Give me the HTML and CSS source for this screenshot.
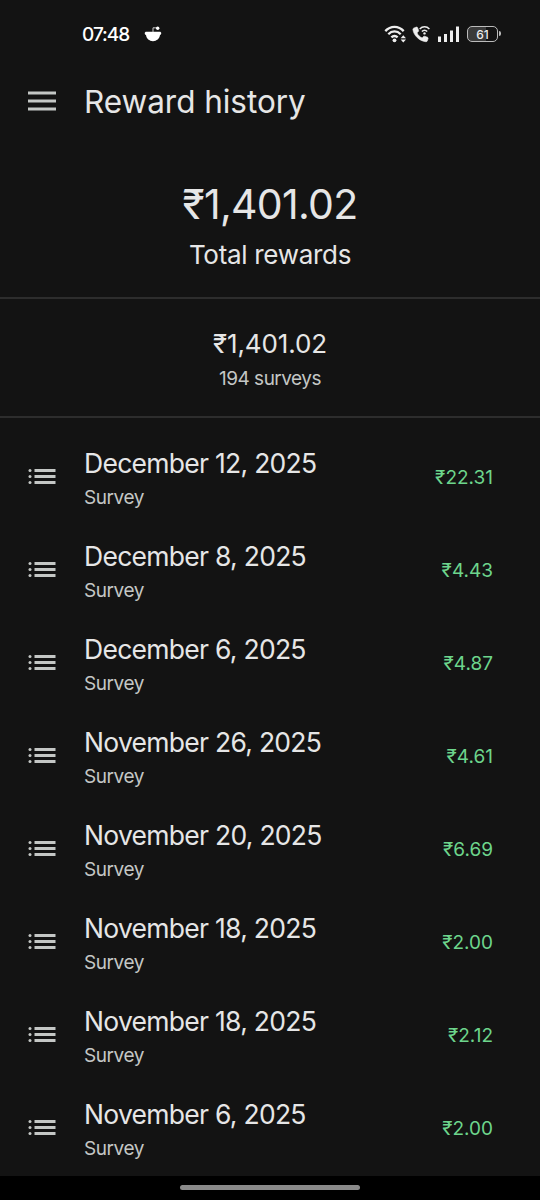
FILE: index.html
```html
<!DOCTYPE html>
<html lang="en">
<head>
  <meta charset="UTF-8" />
  <meta name="viewport" content="width=device-width, initial-scale=1.0" />
  <title>Reward history</title>
  <link rel="stylesheet" href="styles.css">
</head>

<body>
  <svg class="defs" width="0" height="0">
    <symbol id="list-icon" viewBox="0 0 28 18">
      <circle cx="2" cy="2.500" r="1.500" />
      <circle cx="2" cy="8.500" r="1.500" />
      <circle cx="2" cy="14.500" r="1.500" />
      <path d="M6.500 1h21v3h-21zM6.500 7h21v3h-21zM6.500 13h21v3h-21z" />
    </symbol>
  </svg>

  <div class="status-bar">
    <span class="time">07:48</span>
    <svg class="reddit" width="18" height="17" viewBox="0 0 18 17">
      <path d="M2.300 5.800h13.400c1.900 0 2.100 2.600.3 3.300-.4 3.600-3.300 6.100-7 6.100s-6.600-2.500-7-6.100C.2 8.400.4 5.800 2.300 5.800z" fill="#fff" />
      <path d="M9 6V1.800l4.200.1" fill="none" stroke="#ccc" stroke-width="1" />
      <circle cx="13.700" cy="2.200" r="1.700" fill="#fff" />
    </svg>
    <div class="status-icons">
      <svg class="wifi" width="23" height="18" viewBox="0 0 23 18">
        <path d="M1.300 6.100C6.500.5 14.500.5 19.700 6.100M4.300 9.300c3.600-3.800 8.800-3.800 12.400 0M7.400 12.400c1.800-1.900 4.400-1.900 6.200 0" fill="none" stroke="#eee" stroke-width="2.300" />
        <circle cx="10.500" cy="15.300" r="1.900" fill="#eee" />
        <path d="M16.600 13.200l2.700-2.900 2.700 2.900zM16.600 14.500H22l-2.700 2.900z" fill="#eee" />
      </svg>
      <svg class="call" width="19" height="18" viewBox="0 0 19 18">
        <path d="M2.100 2.900l2.300-.8c.6-.2 1 .1 1.200.6l1 2.700c.2.500 0 .9-.3 1.200L5 7.800c.9 2.300 2.800 4.200 5.200 5.200l1.300-1.500c.3-.3.700-.4 1.100-.3l2.900 1.100c.5.200.7.700.6 1.200l-.7 2.200c-.2.700-.8 1.100-1.500 1C7.400 16.100 1.700 10.500.9 4.500c-.1-.7.400-1.300 1.200-1.600z" fill="#eee" stroke="#eee" stroke-width=".6" />
        <path d="M7.700 4c2.800-3 6.900-3 9.700 0M9.900 6.500c1.600-1.700 3.700-1.700 5.300 0" fill="none" stroke="#eee" stroke-width="1.500" />
        <circle cx="12.500" cy="8.400" r="1.200" fill="#eee" />
      </svg>
      <svg class="signal" width="23" height="16" viewBox="0 0 23 16">
        <path d="M1 10.500h3V16H1zM7 8h3v8H7zM13 4.500h3V16h-3zM19 .5h3V16h-3z" fill="#eee" />
      </svg>
      <div class="battery">61</div>
    </div>
  </div>

  <header>
    <svg class="menu" width="28" height="20" viewBox="0 0 28 20">
      <path d="M0 .4h28v3H0zM0 8.400h28v3H0zM0 16.400h28v3H0z" />
    </svg>
    <h1>Reward history</h1>
  </header>

  <section class="total">
    <div class="total-amount">₹1,401.02</div>
    <div class="total-label">Total rewards</div>
  </section>

  <section class="summary">
    <div class="summary-amount">₹1,401.02</div>
    <div class="summary-label">194 surveys</div>
  </section>

  <ul class="history">
    <li>
      <svg class="icon"><use href="#list-icon" /></svg>
      <div class="entry"><h2>December 12, 2025</h2><p>Survey</p></div>
      <span class="amount">₹22.31</span>
    </li>
    <li>
      <svg class="icon"><use href="#list-icon" /></svg>
      <div class="entry"><h2>December 8, 2025</h2><p>Survey</p></div>
      <span class="amount">₹4.43</span>
    </li>
    <li>
      <svg class="icon"><use href="#list-icon" /></svg>
      <div class="entry"><h2>December 6, 2025</h2><p>Survey</p></div>
      <span class="amount">₹4.87</span>
    </li>
    <li>
      <svg class="icon"><use href="#list-icon" /></svg>
      <div class="entry"><h2>November 26, 2025</h2><p>Survey</p></div>
      <span class="amount">₹4.61</span>
    </li>
    <li>
      <svg class="icon"><use href="#list-icon" /></svg>
      <div class="entry"><h2>November 20, 2025</h2><p>Survey</p></div>
      <span class="amount">₹6.69</span>
    </li>
    <li>
      <svg class="icon"><use href="#list-icon" /></svg>
      <div class="entry"><h2>November 18, 2025</h2><p>Survey</p></div>
      <span class="amount">₹2.00</span>
    </li>
    <li>
      <svg class="icon"><use href="#list-icon" /></svg>
      <div class="entry"><h2>November 18, 2025</h2><p>Survey</p></div>
      <span class="amount">₹2.12</span>
    </li>
    <li>
      <svg class="icon"><use href="#list-icon" /></svg>
      <div class="entry"><h2>November 6, 2025</h2><p>Survey</p></div>
      <span class="amount">₹2.00</span>
    </li>
  </ul>

  <footer>
    <div class="handle"></div>
  </footer>
</body>
</html>
```

FILE: styles.css
```css
* {
  box-sizing: border-box;
  margin: 0;
  padding: 0;
}

body {
  display: flex;
  flex-direction: column;
  height: 1200px;
  overflow: hidden;
  background: #131313;
  color: #e6e6e6;
  font-family: Inter, Roboto, sans-serif;
}

.defs {
  position: absolute;
}

.status-bar {
  display: flex;
  align-items: center;
  height: 68px;
  padding: 0 42px 0 82px;
}

.time {
  width: 62px;
  padding-top: 1px;
  font-size: 19px;
  font-weight: 500;
  letter-spacing: -1px;
  color: #fff;
}

.status-icons {
  display: flex;
  align-items: center;
  margin-left: auto;
}

.call {
  margin-left: 5px;
}

.signal {
  margin-left: 6px;
}

.battery {
  position: relative;
  width: 31px;
  height: 16px;
  margin-left: 7px;
  border: 1.5px solid #bbb;
  border-radius: 5px;
  background: linear-gradient(to right, #3a3a3a 61%, #131313 61%);
  color: #eee;
  font-size: 12px;
  font-weight: 500;
  line-height: 15px;
  text-align: center;
}

.battery::after {
  content: "";
  position: absolute;
  top: 4px;
  right: -3.5px;
  width: 2px;
  height: 5px;
  border-radius: 0 2px 2px 0;
  background: #bbb;
}

header {
  display: flex;
  align-items: center;
  height: 66px;
  padding-left: 28px;
}

.menu {
  margin-right: 28px;
  fill: #c4c7c5;
}

h1 {
  padding-top: 2px;
  font-size: 31.5px;
  font-weight: 400;
  line-height: 38px;
  letter-spacing: -0.05px;
}

.total {
  height: 165px;
  padding-top: 46px;
  border-bottom: 2px solid #2d2d2d;
  text-align: center;
}

.total-amount {
  font-size: 41px;
  line-height: 48px;
  letter-spacing: -0.7px;
}

.total-label {
  margin-top: 11px;
  font-size: 26px;
  line-height: 32px;
  letter-spacing: -0.3px;
}

.summary {
  height: 119px;
  padding-top: 29px;
  border-bottom: 2px solid #2d2d2d;
  text-align: center;
}

.summary-amount {
  font-size: 26px;
  line-height: 32px;
  letter-spacing: -0.1px;
}

.summary-label {
  margin-top: 7px;
  color: #c4c7c5;
  font-size: 19px;
  line-height: 24px;
  letter-spacing: -0.5px;
}

.history {
  flex: 1;
  padding-top: 12px;
  list-style: none;
}

.history li {
  display: flex;
  align-items: center;
  height: 93px;
  padding: 0 47px 0 28px;
}

.icon {
  width: 28px;
  height: 18px;
  margin-right: 28px;
  fill: #c4c7c5;
}

.entry {
  flex: 1;
  padding-top: 3px;
}

h2 {
  font-size: 26.5px;
  font-weight: 400;
  line-height: 34px;
  letter-spacing: -0.72px;
}

.entry p {
  padding-top: 5px;
  color: #c4c7c5;
  font-size: 19px;
  line-height: 26px;
  letter-spacing: -0.45px;
}

.amount {
  padding-top: 1px;
  color: #6dd58c;
  font-size: 19px;
}

footer {
  display: flex;
  justify-content: center;
  height: 24px;
  padding-top: 9px;
  background: #000;
}

.handle {
  width: 180px;
  height: 5px;
  border-radius: 3px;
  background: #8a8a8a;
}
```
